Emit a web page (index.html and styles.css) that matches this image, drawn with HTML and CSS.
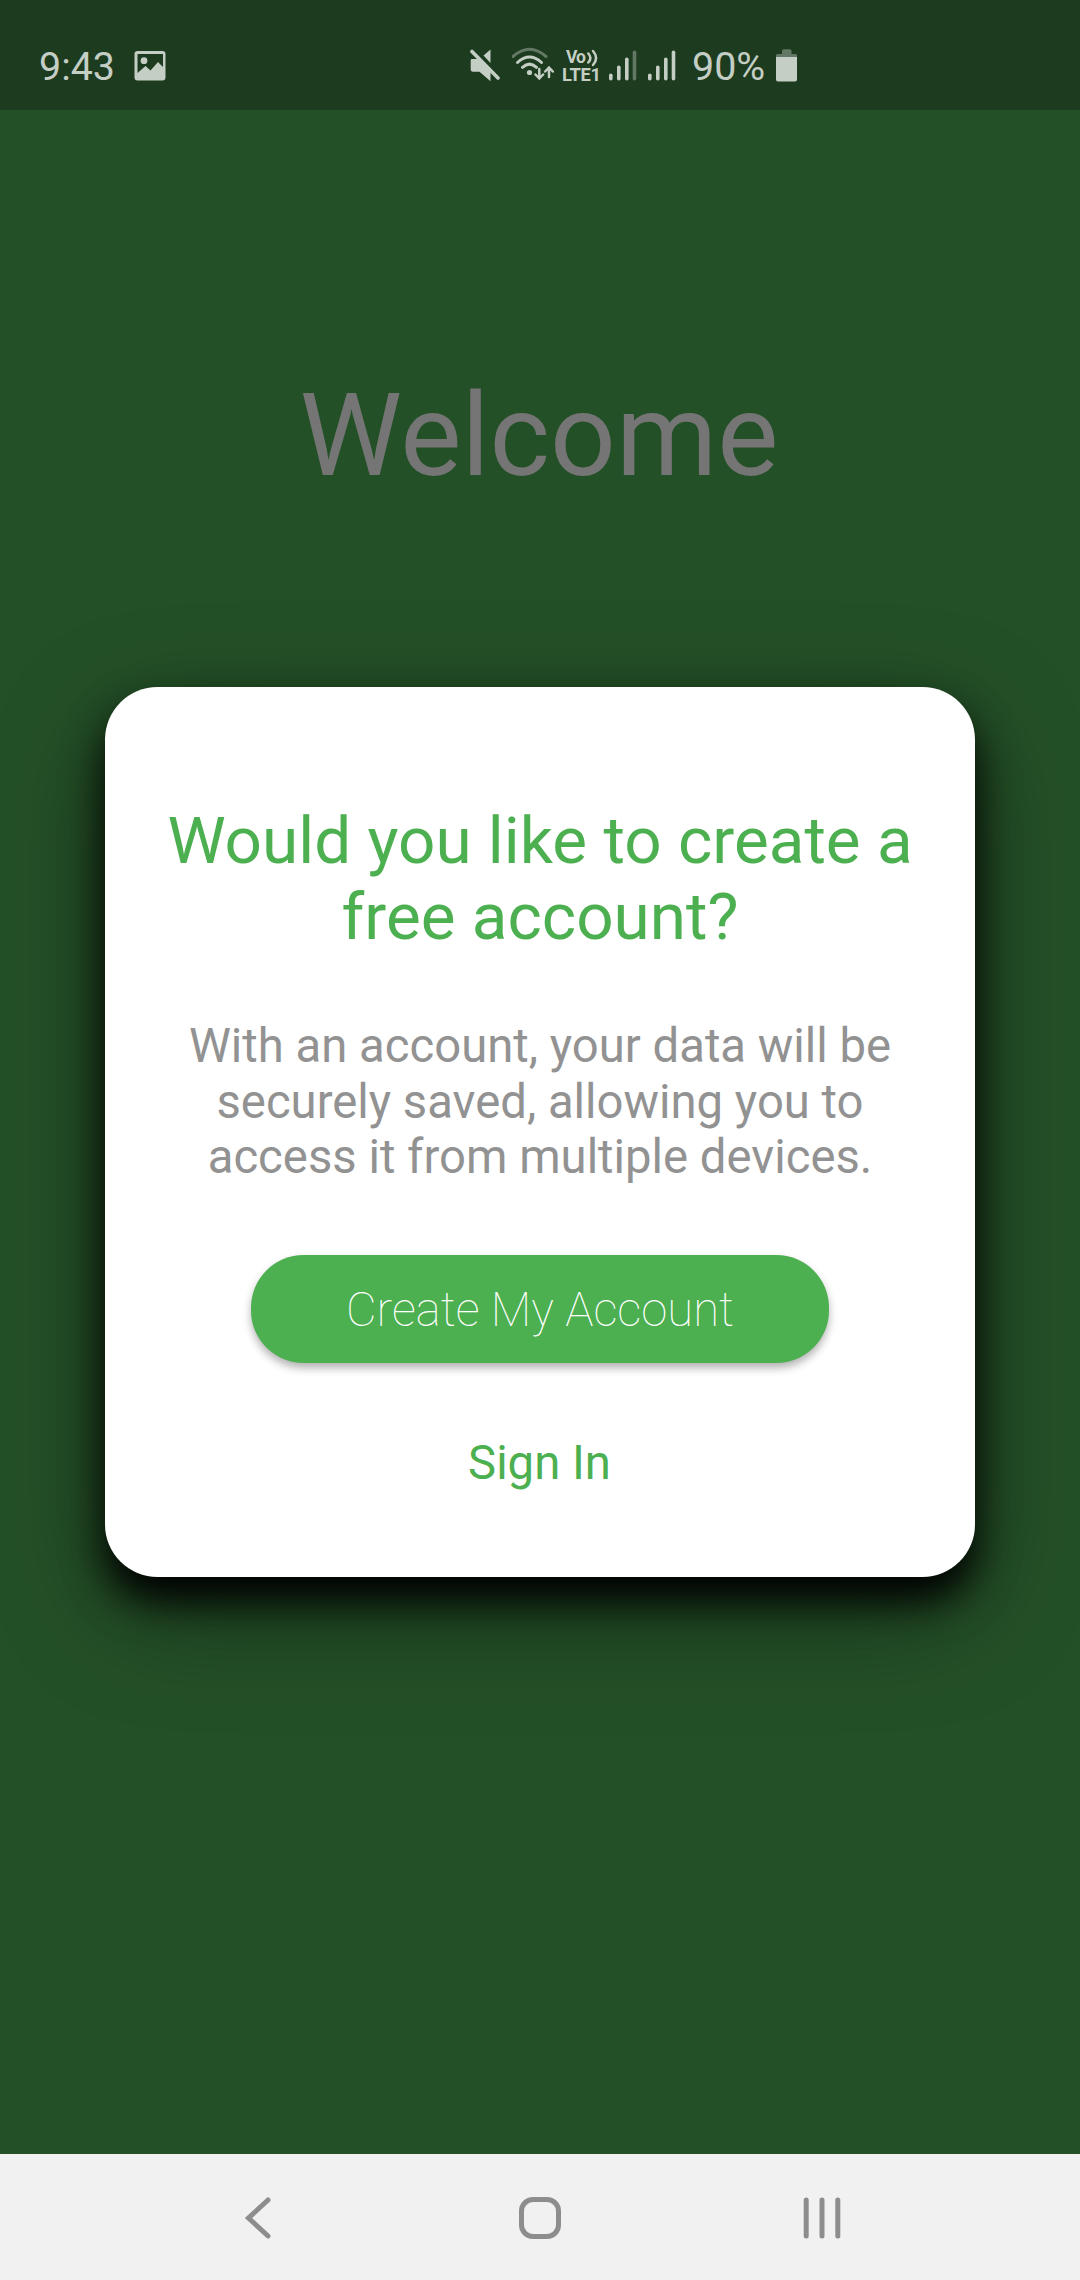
FILE: index.html
```html
<!DOCTYPE html>
<html lang="en">
<head>
<meta charset="utf-8">
<title>Welcome</title>
<link rel="stylesheet" href="styles.css">
</head>
<body>
<div class="screen">
  <header class="status-bar">
    <div class="status-group status-left">
      <span class="clock">9:43</span>
      <svg class="icon" width="32" height="50" viewBox="0 0 32 50">
        <path fill-rule="evenodd" d="M3.500 11h25a3 3 0 0 1 3 3v23.500a3 3 0 0 1-3 3h-25a3 3 0 0 1-3-3V14a3 3 0 0 1 3-3zM3.500 14v19l8-7 5 4.500 7.500-8.500 5 5V14z"/>
        <circle cx="10" cy="20.700" r="3.400"/>
      </svg>
    </div>
    <div class="status-group status-right">
      <svg class="icon" width="30" height="50" viewBox="0 0 30 50">
        <path d="M20.500 9.500V23L13.500 15.500zM1.500 19H8L20.500 31.500V41.200L9.500 31.700H3Q0.700 31.700 0.700 29V21Q0.700 19 1.500 19z"/>
        <path class="line" stroke-width="3.600" d="M2 11.500L28 38"/>
      </svg>
      <svg class="icon wifi" width="42" height="50" viewBox="0 0 42 50">
        <g class="line" stroke-width="3">
          <path class="dim" d="M1 16.500Q17.500 2 34 16.500"/>
          <path d="M5.500 22.500Q17.500 11.500 29.500 22.500"/>
          <path d="M10.500 27.300Q17.500 21 24.500 27.300"/>
          <path stroke-width="2.500" d="M27.300 29V38M23.500 34.500L27.300 38.500L31.100 34.500M37 37V28M33.200 31.500L37 27.500L40.800 31.500"/>
        </g>
        <circle cx="17.500" cy="32.500" r="2.600"/>
      </svg>
      <svg class="icon volte" width="40" height="50" viewBox="0 0 40 50">
        <text x="4" y="23.300" font-size="17.500" textLength="20">Vo</text>
        <g class="line" stroke-width="2.500">
          <path d="M26.300 13.500Q30.500 18 26.300 22.500"/>
          <path d="M31 11Q37.200 18 31 25"/>
        </g>
        <text x="0" y="41" font-size="18.300" textLength="39">LTE1</text>
      </svg>
      <svg class="icon signal" width="28" height="50" viewBox="0 0 28 50">
        <rect x="0" y="33.500" width="3.600" height="7" rx="1.800"/>
        <rect x="8" y="25.500" width="3.600" height="15" rx="1.800"/>
        <rect x="16" y="17.500" width="3.600" height="23" rx="1.800"/>
        <rect class="dim" x="23.700" y="10.500" width="3.600" height="30" rx="1.800"/>
      </svg>
      <svg class="icon signal-two" width="28" height="50" viewBox="0 0 28 50">
        <rect x="0" y="33.500" width="3.600" height="7" rx="1.800"/>
        <rect x="8" y="25.500" width="3.600" height="15" rx="1.800"/>
        <rect x="16" y="17.500" width="3.600" height="23" rx="1.800"/>
        <rect x="23.700" y="10.500" width="3.600" height="30" rx="1.800"/>
      </svg>
      <span class="battery-level">90%</span>
      <svg class="icon" width="22" height="50" viewBox="0 0 22 50">
        <path class="dim" d="M0 17V15.500Q0 14 1.500 14H6V11Q6 9.300 7.500 9.300H14Q15.500 9.300 15.500 11V14H19.500Q21 14 21 15.500V17z"/>
        <path d="M0 17H21V39.500Q21 41.500 19 41.500H2Q0 41.500 0 39.500z"/>
      </svg>
    </div>
  </header>

  <main class="content">
    <h1 class="welcome">Welcome</h1>
    <section class="card">
      <h2 class="card-title">Would you like to create a<br>free account?</h2>
      <p class="card-text">With an account, your data will be<br>securely saved, allowing you to<br>access it from multiple devices.</p>
      <button class="primary">Create My Account</button>
      <button class="link">Sign In</button>
    </section>
  </main>

  <nav class="nav-bar">
    <svg width="44" height="44" viewBox="0 0 44 44"><path d="M32 4L12.500 22L32 40"/></svg>
    <svg width="44" height="44" viewBox="0 0 44 44"><rect x="3.500" y="3.500" width="37" height="37" rx="11.500"/></svg>
    <svg width="44" height="44" viewBox="0 0 44 44"><path d="M6.200 4V40M22 4V40M37.800 4V40"/></svg>
  </nav>
</div>
</body>
</html>
```
FILE: styles.css
```css
* {
  box-sizing: border-box;
  margin: 0;
}

body {
  font-family: Roboto, "Liberation Sans", sans-serif;
}

.screen {
  width: 1080px;
  height: 2280px;
  display: flex;
  flex-direction: column;
  overflow: hidden;
  background: #245027;
}

.status-bar {
  height: 110px;
  flex: none;
  display: flex;
  padding: 40px 0 18px 39px;
  background: #1d3b1e;
  color: #c4cec5;
  font-size: 39.4px;
  line-height: 54px;
}

.status-group {
  display: flex;
  align-items: flex-start;
}

.status-left {
  width: 431px;
  gap: 19px;
}

.icon {
  flex: none;
  fill: #c4cec5;
}

.icon .line {
  fill: none;
  stroke: #c4cec5;
  stroke-linecap: round;
}

.icon .dim {
  opacity: 0.42;
}

.icon text {
  font-weight: 700;
}

.wifi {
  margin-left: 12px;
}

.volte {
  margin-left: 8px;
}

.signal {
  margin-left: 7px;
}

.signal-two {
  margin-left: 11px;
}

.battery-level {
  width: 84px;
  margin-left: 16px;
}

.content {
  flex: 1;
  display: flex;
  flex-direction: column;
  align-items: center;
}

.welcome {
  margin-top: 258px;
  padding-right: 2px;
  font-size: 115.5px;
  font-weight: 400;
  line-height: 136px;
  color: #757575;
}

.card {
  width: 870px;
  height: 890px;
  margin-top: 183px;
  padding-top: 116px;
  display: flex;
  flex-direction: column;
  align-items: center;
  border-radius: 52.5px;
  background: #fff;
  box-shadow: 0 24px 40px #000, 0 36px 110px rgba(0, 0, 0, 0.36);
  text-align: center;
}

.card-title {
  font-size: 65.625px;
  font-weight: 400;
  line-height: 76px;
  color: #4caf50;
}

.card-text {
  margin-top: 64px;
  font-size: 47.25px;
  line-height: 55.5px;
  color: #929292;
}

button {
  border: 0;
  padding: 0;
  font: inherit;
  font-size: 47.25px;
}

.primary {
  width: 578px;
  height: 108px;
  margin-top: 69px;
  padding-top: 2px;
  border-radius: 52.5px;
  background: #4caf50;
  color: #fff;
  font-weight: 100;
  box-shadow: 0 5px 8px rgba(0, 0, 0, 0.3);
}

.link {
  margin-top: 72px;
  padding-right: 1px;
  background: none;
  color: #4caf50;
}

.nav-bar {
  height: 126px;
  flex: none;
  display: flex;
  align-items: center;
  justify-content: center;
  gap: 238px;
  padding-top: 2px;
  background: #f1f1f1;
}

.nav-bar svg {
  fill: none;
  stroke: #8d8d8d;
  stroke-width: 5;
  stroke-linecap: round;
}
```
